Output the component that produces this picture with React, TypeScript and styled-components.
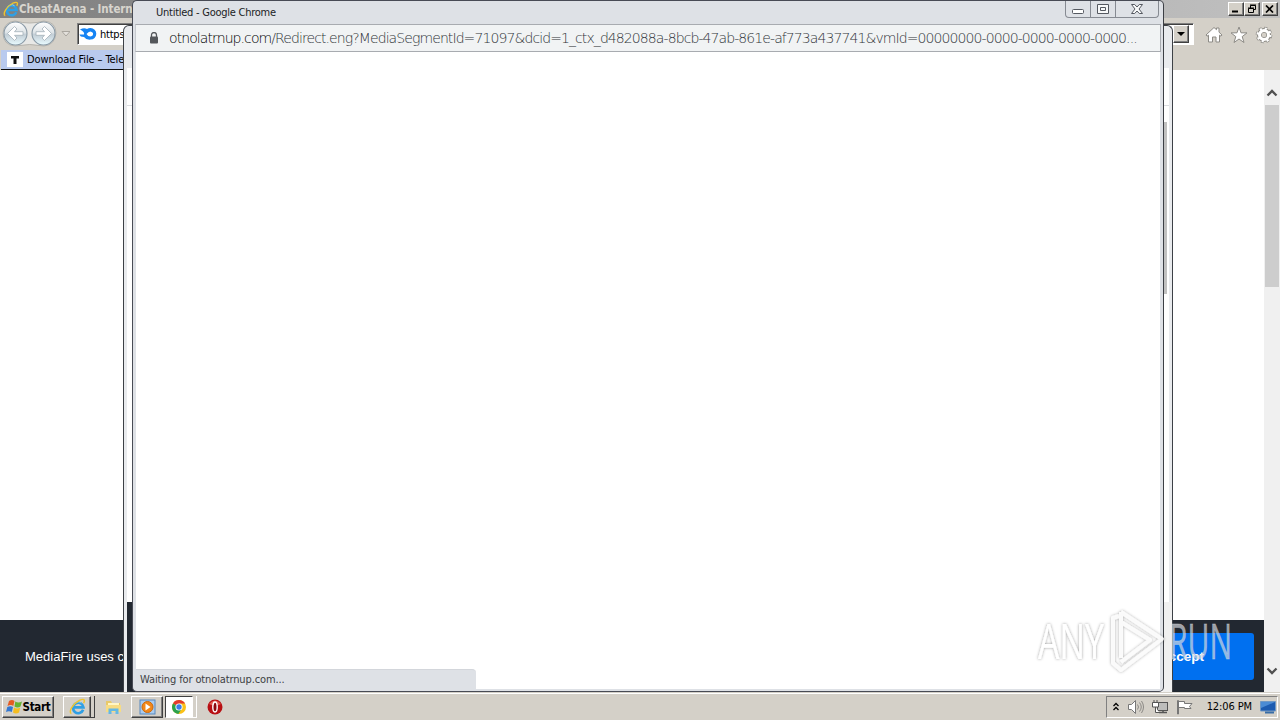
import React from 'react';
import styled, { createGlobalStyle } from 'styled-components';

const UI_FONT = `'DejaVu Sans Condensed', 'DejaVu Sans', sans-serif`;

const GlobalStyle = createGlobalStyle`
    * {
        box-sizing: border-box;
    }
    body {
        margin: 0;
        overflow: hidden;
        background: #d4d0c8;
    }
    svg {
        flex: none;
    }
`;

const Desktop = styled.div`
    position: relative;
    display: flex;
    flex-direction: column;
    width: 1280px;
    height: 720px;
    overflow: hidden;
    font-family: ${UI_FONT};
    font-size: 11px;
    color: #000;
`;

const Label = styled.span<{ $size?: number; $spacing?: number; $color?: string; $bold?: boolean }>`
    font-size: ${({ $size }) => $size || 11}px;
    letter-spacing: ${({ $spacing }) => $spacing || 0}px;
    color: ${({ $color }) => $color || '#000'};
    font-weight: ${({ $bold }) => ($bold ? 700 : 400)};
    white-space: nowrap;
`;

/* Internet Explorer */

const ExplorerWindow = styled.div`
    display: flex;
    flex-direction: column;
    height: 692px;
    flex: none;
`;

const ExplorerTitle = styled.div`
    display: flex;
    align-items: center;
    height: 18px;
    padding: 0 2px 0 3px;
    background: linear-gradient(90deg, #808080, #c0c0c0);
`;

const ExplorerButtons = styled.div`
    display: flex;
    margin-left: auto;
`;

const ClassicButton = styled.div<{ $gap?: number }>`
    display: flex;
    align-items: center;
    justify-content: center;
    width: 16px;
    height: 14px;
    margin-left: ${({ $gap }) => $gap || 0}px;
    background: #d4d0c8;
    border: 1px solid;
    border-color: #fff #404040 #404040 #fff;
    box-shadow: inset -1px -1px #808080;
`;

const ExplorerToolbar = styled.div`
    display: flex;
    align-items: center;
    height: 32px;
    padding-left: 2px;
    background: #d4d0c8;
`;

const AddressField = styled.div`
    display: flex;
    flex: none;
    align-items: center;
    width: 1117px;
    height: 22px;
    margin: 0 11px 0 7px;
    padding-left: 1px;
    background: #fff;
    border: 1px solid;
    border-color: #808080 #fff #fff #808080;
    box-shadow: inset 1px 1px #404040;
`;

const DropButton = styled(ClassicButton)`
    width: 16px;
    height: 18px;
    margin: 0 4px 0 auto;
`;

const ToolIcons = styled.div`
    display: flex;
    gap: 7px;
    height: 18px;
    margin-top: 2px;
`;

const ExplorerTabs = styled.div`
    display: flex;
    height: 20px;
    padding-left: 1px;
    background: #d4d0c8;
`;

const ExplorerTab = styled.div`
    display: flex;
    align-items: center;
    width: 200px;
    padding-left: 6px;
    gap: 4px;
    background: #b9caee;
    border-bottom: 1px solid #101010;
`;

const TabIcon = styled.div`
    display: flex;
    align-items: center;
    justify-content: center;
    width: 16px;
    height: 15px;
    background: #fff;
`;

const ExplorerBody = styled.div`
    display: flex;
    flex: 1;
    background: #fff;
`;

const ExplorerPage = styled.div`
    display: flex;
    flex: 1;
    flex-direction: column;
    justify-content: flex-end;
`;

const CookieBar = styled.div`
    display: flex;
    align-items: center;
    justify-content: space-between;
    height: 72px;
    padding: 0 10px 0 25px;
    background: #222831;
    font-family: 'Liberation Sans', Arial, sans-serif;
`;

const CookieText = styled.span`
    font-size: 13px;
    color: #fff;
`;

const AcceptButton = styled.div`
    display: flex;
    align-items: center;
    justify-content: flex-end;
    width: 146px;
    height: 47px;
    padding-right: 50px;
    border-radius: 3px;
    background: #0070f0;
    color: #fff;
    font-size: 13.5px;
    font-weight: 700;
`;

const Scrollbar = styled.div`
    display: flex;
    flex-direction: column;
    align-items: center;
    width: 16px;
    padding: 18px 0 16px;
    background: #f0f0f0;
`;

const Thumb = styled.div`
    width: 14px;
    height: 182px;
    margin: 7px 0 auto;
    background: #cdcdcd;
`;

/* Chrome windows, stacked over the browser */

const BackWindow = styled.div`
    position: absolute;
    left: 123px;
    top: 25px;
    width: 1050px;
    height: 667px;
    display: flex;
    flex-direction: column;
    padding: 0 3px;
    background: #e9ebee;
    border: 1px solid #3c4046;
    border-bottom: 0;
    border-radius: 6px 6px 0 0;
`;

const BackHeader = styled.div`
    height: 42px;
    flex: none;
`;

const BackToolbar = styled.div`
    height: 38px;
    flex: none;
    background: #fff;
    border-bottom: 1px solid #dadce0;
`;

const BackPage = styled.div`
    display: flex;
    flex-direction: column;
    justify-content: space-between;
    align-items: flex-end;
    flex: 1;
    padding-top: 16px;
    background: #fff;
`;

const BackThumb = styled.div`
    width: 12px;
    height: 172px;
    margin-right: 2px;
    background: #c1c1c1;
`;

const BackFooter = styled.div`
    width: 1000px;
    height: 90px;
    margin-right: auto;
    background: #222831;
`;

const BackEdge = styled.div`
    position: absolute;
    right: 0;
    bottom: 0;
    width: 9px;
    height: 90px;
    background: #f0f0f0;
`;

const FrontWindow = styled.div`
    position: absolute;
    left: 132px;
    top: 0;
    width: 1032px;
    height: 692px;
    display: flex;
    flex-direction: column;
    padding: 0 2px 2px;
    background: #dee1e6;
    border: 1px solid #484b55;
    border-right: 1px solid #3c3f45;
    border-radius: 5px;
`;

const FrontTitle = styled.div`
    display: flex;
    align-items: flex-start;
    height: 23px;
    flex: none;
    padding: 5px 2px 0 21px;
`;

const WindowControls = styled.div`
    display: flex;
    height: 17px;
    margin: -5px 0 0 auto;
    border: 1px solid #868a92;
    border-top: 0;
    border-radius: 0 0 4px 4px;
`;

const Control = styled.div<{ $width: number }>`
    display: flex;
    align-items: center;
    justify-content: center;
    width: ${({ $width }) => $width}px;

    & + & {
        border-left: 1px solid #868a92;
    }
`;

const UrlBar = styled.div`
    display: flex;
    align-items: center;
    height: 28px;
    flex: none;
    padding-left: 13px;
    background: #f1f3f4;
    border: 1px solid #a8abb0;
    border-left-color: #c8cbd0;
`;

const UrlText = styled.div`
    margin: -1px 0 0 10px;
    font-family: 'DejaVu Sans Light', 'DejaVu Sans', sans-serif;
    font-weight: 200;
    font-size: 14px;
    letter-spacing: -0.91px;
    white-space: nowrap;
    color: #303338;

    b {
        font-weight: 200;
        color: #000;
    }
`;

const FrontPage = styled.div`
    display: flex;
    align-items: flex-end;
    flex: 1;
    margin: 0 1px;
    background: #fff;
`;

const StatusBubble = styled.div`
    width: 340px;
    height: 20px;
    padding: 3px 0 0 4px;
    background: #dee1e6;
    border-top: 1px solid #d3d6db;
    border-radius: 0 4px 0 0;
`;

const Watermark = styled.svg`
    position: absolute;
    left: 1030px;
    top: 600px;
`;

/* Taskbar */

const Taskbar = styled.div`
    display: flex;
    align-items: center;
    flex: 1;
    padding: 0 2px;
    background: #d4d0c8;
    border-top: 1px solid #d4d0c8;
    box-shadow: inset 0 1px #fff;
`;

const TaskButton = styled.div<{ $width: number; $left?: number; $active?: boolean; $flat?: boolean }>`
    display: flex;
    flex: none;
    align-items: center;
    justify-content: center;
    width: ${({ $width }) => $width}px;
    height: 22px;
    margin-left: ${({ $left }) => $left || 0}px;
    background: ${({ $active }) => ($active ? '#fff' : '#d4d0c8')};
    border: ${({ $flat }) => ($flat ? 0 : 1)}px solid;
    border-color: ${({ $active }) => ($active ? '#404040 #fff #fff #404040' : '#fff #404040 #404040 #fff')};
    box-shadow: ${({ $active, $flat }) => ($active || $flat ? 'none' : 'inset -1px -1px #808080')};
`;

const StackEdge = styled.div<{ $light?: boolean }>`
    width: 4px;
    height: 22px;
    background: #d4d0c8;
    border-right: 1px solid ${({ $light }) => ($light ? '#fff' : '#404040')};
    border-bottom: 1px solid ${({ $light }) => ($light ? '#fff' : '#404040')};
`;

const Tray = styled.div`
    display: flex;
    align-items: center;
    width: 172px;
    height: 22px;
    margin-left: auto;
    padding: 0 1px 0 6px;
    border: 1px solid;
    border-color: #808080 #fff #fff #808080;
`;

const TrayIcons = styled.div`
    display: flex;
    gap: 7px;
    margin-left: 8px;
`;

const Clock = styled(Label)`
    margin: 0 8px 0 auto;
`;

const ExplorerLogo: React.FC<{ size: number }> = ({ size }) => (
    <svg width={size} height={size} viewBox="0 0 18 18">
        <path d="M15 12.500A5.500 5.500 0 1 1 15.300 10H5" fill="none" stroke="#2f9fe4" strokeWidth="2.800" />
        <path d="M5.200 7.500A4.700 4.700 0 0 1 13 5.500" fill="none" stroke="#8ed8f8" />
        <path d="M2.500 16.500C-1 15 4 6 11 2.500c4.500-2 6.500-1 4.500 3" fill="none" stroke="#f1c52c" strokeWidth="1.500" />
    </svg>
);

const NavButtons = () => (
    <svg width="68" height="30" viewBox="0 0 68 30">
        <defs>
            <linearGradient id="nav" x1="0" y1="0" x2="0" y2="1">
                <stop offset="0" stopColor="#fff" />
                <stop offset=".45" stopColor="#dfe5e8" />
                <stop offset=".55" stopColor="#c3ced6" />
                <stop offset="1" stopColor="#e9fbff" />
            </linearGradient>
        </defs>
        <path d="M13 2Q28 6 42 2Q54 3 54 14Q53 26 42 27Q28 24 13 27Q1 26 1 14Q2 3 13 2" fill="#e8e8e6" stroke="#b5b3ad" />
        {[13.5, 41.5].map((x) => (
            <circle key={x} cx={x} cy="14.500" r="11.500" fill="url(#nav)" stroke="#8a9aa6" strokeWidth="1.100" />
        ))}
        <path d="M5.500 14.500l7-7 2.500 2.500-2.500 2.700H21v3.600h-8.500L15 19l-2.500 2.500z" fill="#fff" stroke="#a3b0b9" strokeWidth=".8" />
        <path d="M49.500 14.500l-7-7L40 10l2.500 2.700H34v3.600h8.500L40 19l2.500 2.500z" fill="#fff" stroke="#a3b0b9" strokeWidth=".8" />
        <path d="M60 12.500h8l-4 4.500z" fill="#e4e1dc" stroke="#aaa69f" />
    </svg>
);

const Arrow: React.FC<{ up?: boolean }> = ({ up }) => (
    <svg width="12" height="10" viewBox="0 0 12 10">
        <path d={up ? 'M1.5 7.5L6 3l4.5 4.5' : 'M1.5 2.5L6 7l4.5-4.5'} fill="none" stroke="#505050" strokeWidth="2.300" />
    </svg>
);

const ChromeLogo = () => (
    <svg width="16" height="16" viewBox="0 0 16 16">
        <circle cx="8" cy="8" r="7" fill="#fbc116" />
        <path d="M8 8L2 4.4A7 7 0 0 1 14.1 4.5H8z" fill="#e33b2e" />
        <path d="M8 8L2 4.4A7 7 0 0 0 7.3 15L11 9.5z" fill="#2ba24c" />
        <circle cx="8" cy="8" r="3.6" fill="#fff" />
        <circle cx="8" cy="8" r="2.7" fill="#3b7de9" />
    </svg>
);

const App: React.FC = () => {
    return (
        <Desktop>
            <GlobalStyle />
            <ExplorerWindow>
                <ExplorerTitle>
                    <ExplorerLogo size={16} />
                    <Label $bold $color="#d8d5ce" $size={11.5} $spacing={-0.1}>CheatArena - Intern</Label>
                    <ExplorerButtons>
                        <ClassicButton>
                            <svg width="10" height="8"><path d="M1 6.5h6" stroke="#000" strokeWidth="2" /></svg>
                        </ClassicButton>
                        <ClassicButton>
                            <svg width="10" height="10"><path d="M3.5 4V1.5h5v4H7M3 1h6M1.5 4.5h5v4h-5zM1 4h6" fill="none" stroke="#000" /></svg>
                        </ClassicButton>
                        <ClassicButton $gap={2}>
                            <svg width="10" height="8"><path d="M1 .5l7 7M8 .5l-7 7" stroke="#000" strokeWidth="1.700" /></svg>
                        </ClassicButton>
                    </ExplorerButtons>
                </ExplorerTitle>
                <ExplorerToolbar>
                    <NavButtons />
                    <AddressField>
                        <svg width="18" height="16" viewBox="0 0 18 16">
                            <path d="M1 3.500Q5 1.500 8 3Q9.500 2 11.500 2a5.800 5.800 0 0 1 0 11.600Q7 14 5 11Q1 11 .5 8.500h4.500Q6 6 1 3.500" fill="#1684f4" />
                            <path d="M7.500 8Q11 3.500 14 7q.5 3-2.500 3.500-2.500 0-4-2.500" fill="#fff" />
                        </svg>
                        <Label $spacing={-0.2}>&nbsp;https</Label>
                        <DropButton>
                            <svg width="8" height="5"><path d="M0 0h8L4 4z" fill="#000" /></svg>
                        </DropButton>
                    </AddressField>
                    <ToolIcons>
                        <svg width="18" height="18" viewBox="0 0 18 18">
                            <path d="M1 9l8-7.5 2.5 2.2V2H14v4.2L17 9l-1 1.2-1.5-1V16H11v-5H7.500v5H3.500V9.200l-1.500 1z" fill="#fff" stroke="#8d8b86" />
                        </svg>
                        <svg width="18" height="18" viewBox="0 0 18 18">
                            <path d="M9 1l2 5.800 6 .1-4.800 3.700 1.800 5.900L9 13l-5 3.500 1.800-5.900L1 6.900l6-.1z" fill="#fff" stroke="#8d8b86" />
                        </svg>
                        <svg width="18" height="18" viewBox="0 0 18 18">
                            <circle cx="9" cy="9" r="6.800" fill="none" stroke="#8d8b86" strokeWidth="3" strokeDasharray="2.9 2.440" />
                            <circle cx="9" cy="9" r="4.700" fill="none" stroke="#8d8b86" strokeWidth="4.800" />
                            <circle cx="9" cy="9" r="6.300" fill="none" stroke="#fff" strokeWidth="2.500" strokeDasharray="2 2.950" />
                            <circle cx="9" cy="9" r="4.500" fill="none" stroke="#fff" strokeWidth="3" />
                        </svg>
                    </ToolIcons>
                </ExplorerToolbar>
                <ExplorerTabs>
                    <ExplorerTab>
                        <TabIcon>
                            <svg width="8" height="8"><path d="M0 0h8v2.500H5.500V8h-3V2.500H0z" fill="#111" /></svg>
                        </TabIcon>
                        <Label $spacing={-0.1}>Download File – Tele</Label>
                    </ExplorerTab>
                </ExplorerTabs>
                <ExplorerBody>
                    <ExplorerPage>
                        <CookieBar>
                            <CookieText>MediaFire uses c</CookieText>
                            <AcceptButton>Accept</AcceptButton>
                        </CookieBar>
                    </ExplorerPage>
                    <Scrollbar>
                        <Arrow up />
                        <Thumb />
                        <Arrow />
                    </Scrollbar>
                </ExplorerBody>
            </ExplorerWindow>

            <BackWindow>
                <BackHeader />
                <BackToolbar />
                <BackPage>
                    <BackThumb />
                    <BackFooter />
                </BackPage>
                <BackEdge />
            </BackWindow>

            <FrontWindow>
                <FrontTitle>
                    <Label $color="#202124" $spacing={-0.25}>Untitled - Google Chrome</Label>
                    <WindowControls>
                        <Control $width={24}>
                            <svg width="14" height="16"><rect x="1.5" y="8.500" width="11" height="4" rx="1" fill="#fff" stroke="#555961" /></svg>
                        </Control>
                        <Control $width={25}>
                            <svg width="14" height="16"><path d="M1.500 3.500h11v9h-11zM4.500 6.500h5v3h-5z" fill="#f8f9fa" stroke="#555961" /></svg>
                        </Control>
                        <Control $width={43}>
                            <svg width="14" height="16">
                                <path d="M1.500 3.500h3.200L7 6l2.300-2.500h3.200L9 8l3.500 4.500H9.300L7 10l-2.300 2.500H1.500L5 8z" fill="#f8f9fa" stroke="#555961" />
                            </svg>
                        </Control>
                    </WindowControls>
                </FrontTitle>
                <UrlBar>
                    <svg width="10" height="12" viewBox="0 0 10 12">
                        <path d="M2.500 5V3a2.500 2.500 0 0 1 5 0v2" fill="none" stroke="#54575b" strokeWidth="1.300" />
                        <rect x="1" y="4.500" width="8" height="7" rx="1" fill="#54575b" />
                    </svg>
                    <UrlText>
                        <b>otnolatrnup.com</b>/Redirect.eng?MediaSegmentId=71097&amp;dcid=1_ctx_d482088a-8bcb-47ab-861e-af773a437741&amp;vmId=00000000-0000-0000-0000-0000...
                    </UrlText>
                </UrlBar>
                <FrontPage>
                    <StatusBubble>
                        <Label $color="#3c4043" $spacing={-0.13}>Waiting for otnolatrnup.com...</Label>
                    </StatusBubble>
                </FrontPage>
            </FrontWindow>

            <Taskbar>
                <TaskButton $width={52}>
                    <svg width="17" height="16" viewBox="0 0 17 16">
                        <path d="M3 2q3-2 5.500 0L7.300 7Q5 5 1.500 7z" fill="#e55b22" />
                        <path d="M9.300 2.500q3 2 6.700 0L14.500 7.500q-3 2-6 0z" fill="#65b332" />
                        <path d="M1.300 8Q4.500 6.500 7 8L5.800 13Q3 11.500 0 13z" fill="#3478d2" />
                        <path d="M8 8.500q3 2 6.200 0L13 13.500q-3 2-6 0z" fill="#f5bd1f" />
                    </svg>
                    <Label $bold $size={11.5} $spacing={-0.3}>Start</Label>
                </TaskButton>
                <TaskButton $width={28} $left={9}><ExplorerLogo size={17} /></TaskButton>
                <StackEdge />
                <TaskButton $width={28} $left={4} $flat>
                    <svg width="17" height="16" viewBox="0 0 17 16">
                        <path d="M1 2h5l1 2h8v9H1z" fill="#e8c969" />
                        <path d="M3 4h11v3H3z" fill="#fff6c5" />
                        <path d="M1 6h15v7H1z" fill="#f7dc83" />
                        <path d="M3.500 15V9.500h10V15h-3v-3h-4v3z" fill="#65b8e4" />
                    </svg>
                </TaskButton>
                <TaskButton $width={32} $left={4}>
                    <svg width="17" height="16" viewBox="0 0 17 16">
                        <rect x="1" y="1" width="15" height="14" fill="#aacbee" stroke="#5788bd" />
                        <circle cx="8.500" cy="8" r="5.500" fill="#f28718" stroke="#ce6a0c" />
                        <path d="M6.500 4.500v7l5-3.500z" fill="#fff" />
                    </svg>
                </TaskButton>
                <TaskButton $width={28} $left={2} $active><ChromeLogo /></TaskButton>
                <StackEdge $light />
                <TaskButton $width={28} $left={4} $flat>
                    <svg width="16" height="16" viewBox="0 0 16 16">
                        <circle cx="8" cy="8" r="7.500" fill="#b80f13" />
                        <path d="M2 5Q8-2 14 5Q8 8 2 5" fill="#e45c50" />
                        <ellipse cx="8" cy="8" rx="2.200" ry="5" fill="#8d080d" stroke="#fff" strokeWidth="1.400" />
                    </svg>
                </TaskButton>
                <Tray>
                    <svg width="6" height="10"><path d="M.5 4L3 1.500 5.500 4M.5 8L3 5.500 5.500 8" fill="none" stroke="#000" strokeWidth="1.300" /></svg>
                    <TrayIcons>
                        <svg width="18" height="16" viewBox="0 0 18 16">
                            <path d="M1.500 5.500h3l4-4v13l-4-4h-3z" fill="#fff" stroke="#777" />
                            <path d="M10.500 5.500q2 2.500 0 5M12.500 3.500q3.500 4.500 0 9M14.500 2q4 6 0 12" fill="none" stroke="#8b8985" />
                        </svg>
                        <svg width="17" height="16" viewBox="0 0 17 16">
                            <rect x="5.500" y="3.500" width="10" height="8" fill="#bdbdbb" stroke="#555" />
                            <path d="M7 13.500h8M11 12v2" stroke="#555" strokeWidth="1.500" />
                            <path d="M.5 3.500h6V8h-6zM2 3.500V1M5 3.500V1M3.500 8v5.500H7" fill="#fff" stroke="#555" />
                        </svg>
                        <svg width="17" height="16" viewBox="0 0 17 16">
                            <path d="M1.500 15V1.500h1V15zM2.500 2.500h6v2H16l-2.500 3L15 9.500H8.500v-1h-6z" fill="#fff" stroke="#777" />
                        </svg>
                    </TrayIcons>
                    <Clock $spacing={-0.1}>12:06 PM</Clock>
                    <svg width="16" height="14" viewBox="0 0 16 14">
                        <path d="M.5 1.500h15v9.500H.5z" fill="#1d5bb0" stroke="#7098c4" />
                        <path d="M1 2h14L1 8z" fill="#4b8bd4" />
                        <path d="M5 12.500h9" stroke="#386da6" strokeWidth="2" />
                    </svg>
                </Tray>
            </Taskbar>

            <Watermark width="230" height="80" viewBox="0 0 230 80">
                <defs>
                    <filter id="soft" x="-20%" y="-20%" width="140%" height="140%">
                        <feDropShadow dx="0" dy="0" stdDeviation="1.6" floodColor="#000" floodOpacity=".4" />
                    </filter>
                </defs>
                <g fill="none" stroke="#fff" strokeOpacity=".85" strokeWidth="4" strokeLinejoin="round" filter="url(#soft)">
                    <path d="M91 12v46M91 12l41 27-41 31-8-7V18l6-2M91 22l29 18-29 22" />
                </g>
                <g fontFamily="'Open Sans', sans-serif" fontSize="50">
                    <text x="8" y="59" textLength="66" lengthAdjust="spacingAndGlyphs" fill="#fff" filter="url(#soft)">ANY</text>
                    <text x="139" y="59" textLength="63" lengthAdjust="spacingAndGlyphs" fill="#d5d9df" fillOpacity=".7" stroke="#d5d9df" strokeOpacity=".4" strokeWidth=".8">RUN</text>
                </g>
            </Watermark>
        </Desktop>
    );
};

export default App;
